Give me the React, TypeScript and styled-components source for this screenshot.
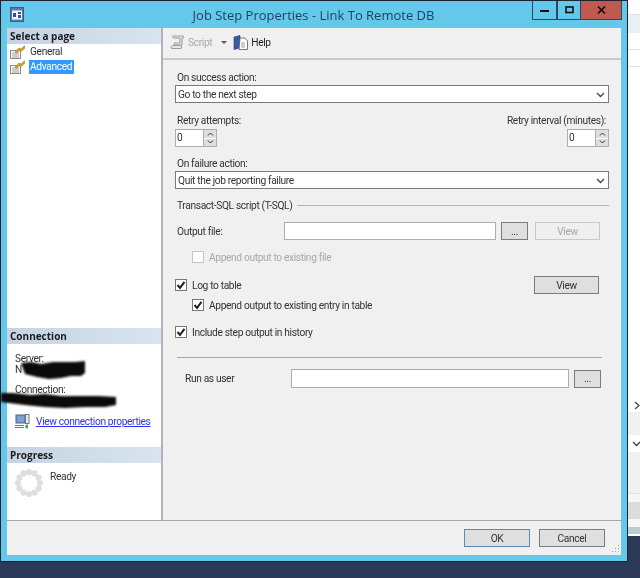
import React from "react";
import styled, { createGlobalStyle } from "styled-components";

const Global = createGlobalStyle`
  html, body { margin: 0; padding: 0; background: #2a3a58; }
  * { box-sizing: border-box; }
  body { font-family: Roboto, "Liberation Sans", sans-serif; font-size: 10.2px; letter-spacing: -0.35px; color: #222; }
`;

const Desktop = styled.div`
  width: 640px; height: 578px; display: flex; align-items: flex-start; overflow: hidden; background: #2a3a58; position: relative;
  filter: blur(0.35px);
`;
const Window = styled.div`
  width: 628px; height: 562px; flex: none; display: flex; flex-direction: column;
  background: #63c8e9; border: 1px solid #1c2430; padding: 0 6px 6px 6px; position: relative;
`;
const TitleBar = styled.div`
  height: 27px; flex: none; display: flex; align-items: flex-start; position: relative;
`;
const AppIcon = styled.svg` width: 15px; height: 15px; margin: 6px 0 0 3px; flex: none; `;
const Title = styled.div`
  flex: 1; text-align: center; font-family: "Open Sans", sans-serif; letter-spacing: 0; font-size: 13px; line-height: 28px; color: #1f3f5c; padding-left: 70px;
`;
const Caption = styled.div` display: flex; height: 19px; flex: none; margin-right: -1px; `;
const CaptionBtn = styled.div<{ $w: number; $close?: boolean }>`
  width: ${(p) => p.$w}px; height: 19px; display: flex; align-items: center; justify-content: center;
  background: ${(p) => (p.$close ? "#c05a50" : "transparent")};
  border: 1px solid #2a4a5c; border-top: none; border-left-width: ${(p) => (p.$close ? 0 : 1)}px;
  color: #111;
`;
const Client = styled.div` flex: 1; display: flex; flex-direction: column; background: #f0f0f0; min-height: 0; `;
const Body = styled.div` flex: 1; display: flex; min-height: 0; `;
const Sidebar = styled.div`
  width: 156px; flex: none; background: #fff; border-right: 2px solid #b2b2bc; display: flex; flex-direction: column;
`;
const PanelHead = styled.div`
  height: 16px; flex: none; line-height: 16px; padding-left: 3px; font-family: "Open Sans", sans-serif; letter-spacing: 0; font-weight: 700; font-size: 10px; color: #1c1c1c;
  background: linear-gradient(90deg, #c5d3e2, #d8e4f0);
`;
const PageList = styled.div` flex: 1; `;
const PageItem = styled.div` height: 15px; display: flex; align-items: center; padding-left: 3px; `;
const PageIcon = styled.svg` width: 15px; height: 14px; flex: none; margin-right: 4px; `;
const PageText = styled.span<{ $sel?: boolean }>`
  padding: 0 1px; line-height: 14px; min-width: 45px; color: ${(p) => (p.$sel ? "#fff" : "#333")}; background: ${(p) => (p.$sel ? "#3399ff" : "transparent")};
`;
const ConnSection = styled.div` height: 119px; flex: none; display: flex; flex-direction: column; `;
const ConnBody = styled.div` padding: 9px 0 0 8px; display: flex; flex-direction: column; flex: 1; `;
const ConnLine = styled.div<{ $gap?: number }>` line-height: 11px; height: 11px; color: #333; margin-top: ${(p) => p.$gap ?? 0}px; `;
const LinkRow = styled.div` display: flex; align-items: center; margin-top: 8px; height: 15px; `;
const NetIcon = styled.svg` width: 15px; height: 15px; flex: none; margin-right: 6px; `;
const LinkText = styled.a` color: #3030f0; text-decoration: underline; white-space: nowrap; `;
const ProgressSection = styled.div` height: 73px; flex: none; display: flex; flex-direction: column; `;
const ProgressBody = styled.div` display: flex; padding: 6px 0 0 8px; `;
const Spinner = styled.svg` width: 28px; height: 28px; flex: none; margin-right: 7px; `;
const ReadyText = styled.span` margin-top: 2px; color: #333; `;
const Scribble = styled.svg` position: absolute; left: 0; top: 0; width: 120px; height: 420px; filter: blur(0.8px); pointer-events: none; `;
const Main = styled.div` flex: 1; display: flex; flex-direction: column; min-width: 0; `;
const Toolbar = styled.div`
  height: 32px; flex: none; display: flex; align-items: center; padding: 0 0 1px 7px; border-bottom: 2px solid #c9c9c9;
`;
const ToolIcon = styled.svg` width: 15px; height: 15px; flex: none; `;
const ToolText = styled.span<{ $off?: boolean }>` margin-left: 3px; color: ${(p) => (p.$off ? "#a8a8a8" : "#222")}; `;
const Caret = styled.span`
  width: 0; height: 0; margin: 0 6px 0 9px; border-left: 3px solid transparent; border-right: 3px solid transparent; border-top: 3px solid #555;
`;
const Form = styled.div` flex: 1; padding: 10px 12px 0 12px; display: flex; flex-direction: column; `;
const Label = styled.div<{ $top?: number; $right?: boolean; $off?: boolean; $flush?: boolean }>`
  height: 14px; line-height: 16px; margin-top: ${(p) => p.$top ?? 0}px; padding: ${(p) => (p.$right ? "0 3px 0 0" : p.$flush ? "0" : "0 0 0 2px")};
  text-align: ${(p) => (p.$right ? "right" : "left")}; color: ${(p) => (p.$off ? "#a8a8a8" : "#333")}; white-space: nowrap;
`;
const Select = styled.div`
  height: 18px; margin-top: 1px; flex: none; background: #fff; border: 1px solid #7a7a7a; display: flex; align-items: center; justify-content: space-between;
  padding: 1px 3px 0 2px; color: #333;
`;
const Chevron = styled.svg` width: 9px; height: 6px; flex: none; `;
const RetryRow = styled.div` display: flex; justify-content: space-between; margin-top: 10px; flex: none; `;
const RetryCol = styled.div<{ $end?: boolean }>` display: flex; flex-direction: column; align-items: ${(p) => (p.$end ? "flex-end" : "flex-start")}; `;
const Spin = styled.div` display: flex; margin-top: 2px; width: 42px; height: 18px; `;
const SpinInput = styled.div` width: 28px; background: #fff; border: 1px solid #adadad; border-right: none; padding-left: 1px; line-height: 15px; color: #333; `;
const SpinBtns = styled.div` width: 14px; display: flex; flex-direction: column; gap: 1px; background: #fff; border: 1px solid #adadad; `;
const SpinBtn = styled.div` flex: 1; background: #dedede; display: flex; align-items: center; justify-content: center; `;
const Section = styled.div` display: flex; align-items: center; height: 14px; margin-top: 9px; flex: none; `;
const SectionLine = styled.div` flex: 1; height: 1px; background: #b4b4b4; margin-left: 5px; `;
const Row = styled.div<{ $top: number; $h: number; $indent?: number }>`
  display: flex; align-items: center; flex: none; height: ${(p) => p.$h}px; margin-top: ${(p) => p.$top}px; margin-left: ${(p) => p.$indent ?? 0}px;
`;
const RowLabel = styled.div<{ $w: number; $pad: number; $shift?: number }>`
  width: ${(p) => p.$w}px; padding-left: ${(p) => p.$pad}px; padding-top: ${(p) => p.$shift ?? 0}px; flex: none; color: #333;
`;
const TextBox = styled.div<{ $w: number }>` width: ${(p) => p.$w}px; align-self: stretch; background: #fff; border: 1px solid #adadad; flex: none; `;
const Btn = styled.div<{ $w: number; $off?: boolean; $primary?: boolean; $left?: number; $auto?: boolean; $right?: number }>`
  width: ${(p) => p.$w}px; height: 18px; flex: none; display: flex; align-items: center; justify-content: center;
  margin-left: ${(p) => (p.$auto ? "auto" : `${p.$left ?? 0}px`)}; margin-right: ${(p) => p.$right ?? 0}px;
  background: ${(p) => (p.$off ? "#efefef" : "#dfdfdf")};
  border: 1px solid ${(p) => (p.$off ? "#c8c8c8" : p.$primary ? "#5a8ab8" : "#7c7c7c")};
  color: ${(p) => (p.$off ? "#a8a8a8" : "#333")};
`;
const Check = styled.div<{ $off?: boolean }>`
  width: 12px; height: 12px; flex: none; background: #fff; border: 1px solid ${(p) => (p.$off ? "#c4c4c4" : "#767676")}; margin-right: 5px;
  display: flex; align-items: center; justify-content: center;
`;
const Rule = styled.div` height: 1px; background: #a8a8a8; margin: 18px 7px 0 2px; flex: none; `;
const Footer = styled.div`
  height: 35px; flex: none; border-top: 1px solid #a6a6ae; display: flex; justify-content: flex-end; gap: 9px; padding: 8px 16px 0 0; position: relative;
`;
const Grip = styled.svg` position: absolute; right: 1px; bottom: 1px; width: 10px; height: 10px; `;
const Strip = styled.div` flex: 1; height: 536px; display: flex; flex-direction: column; background: #fff; `;
const Band = styled.div<{ $h: number; $bg: string; $line?: boolean }>`
  height: ${(p) => p.$h}px; flex: none; background: ${(p) => p.$bg}; border-bottom: ${(p) => (p.$line ? "1px solid #e2e2e2" : "none")};
  display: flex; align-items: center; justify-content: center; padding-left: 4px;
`;

const CheckMark = () => (
  <svg width="10" height="10" viewBox="0 0 10 10"><path d="M1.5 5 L4 7.8 L8.5 1.8" fill="none" stroke="#222" strokeWidth="2" /></svg>
);
const DownChev = () => (
  <Chevron viewBox="0 0 9 6"><path d="M1 1 L4.5 4.5 L8 1" fill="none" stroke="#444" strokeWidth="1.3" /></Chevron>
);
const SmallUp = () => (
  <svg width="7" height="4" viewBox="0 0 7 4"><path d="M1 3.5 L3.5 1 L6 3.5" fill="none" stroke="#333" /></svg>
);
const SmallDown = () => (
  <svg width="7" height="4" viewBox="0 0 7 4"><path d="M1 .5 L3.5 3 L6 .5" fill="none" stroke="#333" /></svg>
);
const PageGlyph = () => (
  <PageIcon viewBox="0 0 15 14">
    <rect x="0.5" y="5.5" width="10" height="8" fill="#fff" stroke="#8a8a8a" />
    <path d="M2 8h7M2 10h7M2 12h7" stroke="#9a9a9a" />
    <path d="M5 7 L9 3 L11 4 L14.5 .8 L14.5 3.5 L11 6.5 L9 5.5 L7 8z" fill="#d8a820" stroke="#8a6a10" strokeWidth=".5" />
  </PageIcon>
);
const SpinField = () => (
  <Spin>
    <SpinInput>0</SpinInput>
    <SpinBtns>
      <SpinBtn><SmallUp /></SpinBtn>
      <SpinBtn><SmallDown /></SpinBtn>
    </SpinBtns>
  </Spin>
);

const dots = Array.from({ length: 12 }, (_, i) => {
  const a = (i / 12) * Math.PI * 2;
  return { x: 14 + 11 * Math.cos(a), y: 14 + 11 * Math.sin(a) };
});

export default function App() {
  return (
    <Desktop>
      <Global />
      <Window>
        <TitleBar>
          <AppIcon viewBox="0 0 15 15">
            <rect x="0.5" y="0.5" width="13" height="14" fill="#5c78b0" stroke="#44588c" />
            <rect x="2" y="3.5" width="10" height="9" fill="#f4f6fc" />
            <rect x="3" y="6" width="3" height="4" fill="#3050a8" />
            <rect x="8" y="5" width="3" height="2" fill="#3050a8" />
            <rect x="8" y="8" width="3" height="3" fill="#3050a8" />
          </AppIcon>
          <Title>Job Step Properties - Link To Remote DB</Title>
          <Caption>
            <CaptionBtn $w={25}>
              <svg width="9" height="3"><rect width="9" height="2" y="1" fill="#111" /></svg>
            </CaptionBtn>
            <CaptionBtn $w={24}>
              <svg width="9" height="8"><rect x="1" y="1" width="7" height="5.5" fill="none" stroke="#111" strokeWidth="1.6" /></svg>
            </CaptionBtn>
            <CaptionBtn $w={41} $close>
              <svg width="9" height="8" viewBox="0 0 9 8"><path d="M1 .5 L8 7.5 M8 .5 L1 7.5" stroke="#111" strokeWidth="1.7" /></svg>
            </CaptionBtn>
          </Caption>
        </TitleBar>
        <Client>
          <Body>
            <Sidebar>
              <PanelHead>Select a page</PanelHead>
              <PageList>
                <PageItem><PageGlyph /><PageText>General</PageText></PageItem>
                <PageItem><PageGlyph /><PageText $sel>Advanced</PageText></PageItem>
              </PageList>
              <ConnSection>
                <PanelHead>Connection</PanelHead>
                <ConnBody>
                  <ConnLine>Server:</ConnLine>
                  <ConnLine>N</ConnLine>
                  <ConnLine $gap={9}>Connection:</ConnLine>
                  <ConnLine>&nbsp;</ConnLine>
                  <LinkRow>
                    <NetIcon viewBox="0 0 15 15">
                      <rect x="1" y="1" width="9" height="8" fill="#7aa0d8" stroke="#44608c" />
                      <rect x="10.5" y="0.5" width="3.5" height="9" fill="#e8eaf0" stroke="#777" />
                      <path d="M0 11.5h9M0 13.5h9" stroke="#777" />
                      <path d="M10 12.5h3M12 10.5v4" stroke="#2e9e3c" strokeWidth="1.6" />
                    </NetIcon>
                    <LinkText>View connection properties</LinkText>
                  </LinkRow>
                </ConnBody>
              </ConnSection>
              <ProgressSection>
                <PanelHead>Progress</PanelHead>
                <ProgressBody>
                  <Spinner viewBox="0 0 28 28">
                    {dots.map((d, i) => <circle key={i} cx={d.x} cy={d.y} r="3.1" fill="#dedede" />)}
                  </Spinner>
                  <ReadyText>Ready</ReadyText>
                </ProgressBody>
              </ProgressSection>
            </Sidebar>
            <Main>
              <Toolbar>
                <ToolIcon viewBox="0 0 15 15">
                  <path d="M3 1 H13 C14 1 14 3 13 3 H12 V10 H5 C3.5 10 3.5 8 5 8 H10 V3 H4 C2.5 3 2 1 3 1z M1 13 C1 11 3 10.5 4 10.5 H11 C12 10.5 12 13.5 11 13.5 H2z" fill="#e8e8e8" stroke="#9c9c9c" />
                </ToolIcon>
                <ToolText $off>Script</ToolText>
                <Caret />
                <ToolIcon viewBox="0 0 15 15">
                  <path d="M1 2 L7 .5 V13 L1 14.5z" fill="#3a5aa8" stroke="#2a3a78" strokeWidth=".6" />
                  <path d="M7 3 H12 L14.5 6 V14.5 H6z" fill="#fff" stroke="#555" strokeWidth=".8" />
                  <path d="M8 8h4M8 10h4M8 12h4" stroke="#888" strokeWidth=".8" />
                </ToolIcon>
                <ToolText>Help</ToolText>
              </Toolbar>
              <Form>
                <Label>On success action:</Label>
                <Select>Go to the next step<DownChev /></Select>
                <RetryRow>
                  <RetryCol>
                    <Label>Retry attempts:</Label>
                    <SpinField />
                  </RetryCol>
                  <RetryCol $end>
                    <Label $right>Retry interval (minutes):</Label>
                    <SpinField />
                  </RetryCol>
                </RetryRow>
                <Label $top={9}>On failure action:</Label>
                <Select>Quit the job reporting failure<DownChev /></Select>
                <Section>
                  <Label>Transact-SQL script (T-SQL)</Label>
                  <SectionLine />
                </Section>
                <Row $top={10} $h={18}>
                  <RowLabel $w={109} $pad={2} $shift={1}>Output file:</RowLabel>
                  <TextBox $w={212} />
                  <Btn $w={27} $left={5}>...</Btn>
                  <Btn $w={65} $left={7} $off>View</Btn>
                </Row>
                <Row $top={10} $h={14} $indent={17}>
                  <Check $off />
                  <Label $off $flush>Append output to existing file</Label>
                </Row>
                <Row $top={12} $h={18}>
                  <Check><CheckMark /></Check>
                  <Label $flush>Log to table</Label>
                  <Btn $w={65} $auto $right={10}>View</Btn>
                </Row>
                <Row $top={4} $h={14} $indent={17}>
                  <Check><CheckMark /></Check>
                  <Label $flush>Append output to existing entry in table</Label>
                </Row>
                <Row $top={13} $h={14}>
                  <Check><CheckMark /></Check>
                  <Label $flush>Include step output in history</Label>
                </Row>
                <Rule />
                <Row $top={11} $h={19}>
                  <RowLabel $w={116} $pad={10}>Run as user</RowLabel>
                  <TextBox $w={278} />
                  <Btn $w={27} $left={5}>...</Btn>
                </Row>
              </Form>
            </Main>
          </Body>
          <Footer>
            <Btn $w={66} $primary>OK</Btn>
            <Btn $w={66}>Cancel</Btn>
            <Grip viewBox="0 0 10 10">
              <path d="M8 1h1v1h-1zM5 4h1v1h-1zM8 4h1v1h-1zM2 7h1v1h-1zM5 7h1v1h-1zM8 7h1v1h-1z" fill="#a0a0a0" />
            </Grip>
          </Footer>
        </Client>
        <Scribble viewBox="0 0 120 420">
          <path d="M20 362 L30 361 L40 363 L52 361 L64 361 L74 361 L84 360 L84 372 L80 375 L70 375 L60 377 L48 378 L36 376 L24 373 Z" fill="#0a0a0a" />
          <path d="M-1 392 L12 392 L30 394 L44 393 L60 395 L80 395 L98 395 L115 396 L115 404 L104 406 L84 406 L64 407 L44 406 L24 404 L8 402 L-1 401 Z" fill="#0a0a0a" />
        </Scribble>
      </Window>
      <Strip>
        <Band $h={15} $bg="#fff" $line />
        <Band $h={18} $bg="#e9f0f5" />
        <Band $h={17} $bg="#fff" $line />
        <Band $h={17} $bg="#fff" $line />
        <Band $h={331} $bg="#fff" />
        <Band $h={14} $bg="#fff">
          <svg width="6" height="9" viewBox="0 0 6 9"><path d="M1 1 L5 4.5 L1 8" fill="none" stroke="#444" strokeWidth="1.2" /></svg>
        </Band>
        <Band $h={23} $bg="#f0f0f0" />
        <Band $h={17} $bg="#fff"><DownChev /></Band>
        <Band $h={42} $bg="#f0f0f0" $line />
        <Band $h={8} $bg="#f6f6f6" />
        <Band $h={17} $bg="#dcdcdc" />
        <Band $h={8} $bg="#f6f6f6" />
        <Band $h={7} $bg="#b9cdd5" />
      </Strip>
    </Desktop>
  );
}
